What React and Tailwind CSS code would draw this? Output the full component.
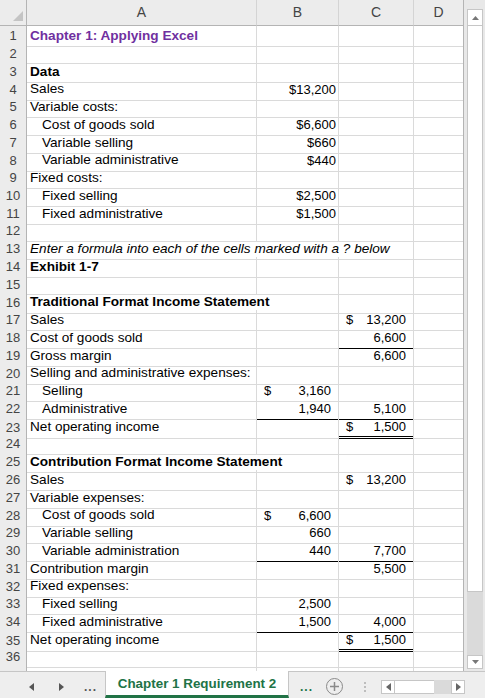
import React from 'react';

const cols = 'grid grid-cols-[27px_230px_82px_75px_49px]';

const rows = [
  { n: 1, a: 'Chapter 1: Applying Excel', k: 'title' },
  { n: 2 },
  { n: 3, a: 'Data', k: 'bold' },
  { n: 4, a: 'Sales', b: { t: '$13,200', cur: true } },
  { n: 5, a: 'Variable costs:' },
  { n: 6, a: 'Cost of goods sold', k: 'indent', b: { t: '$6,600', cur: true } },
  { n: 7, a: 'Variable selling', k: 'indent', b: { t: '$660', cur: true } },
  { n: 8, a: 'Variable administrative', k: 'indent', b: { t: '$440', cur: true } },
  { n: 9, a: 'Fixed costs:' },
  { n: 10, a: 'Fixed selling', k: 'indent', b: { t: '$2,500', cur: true } },
  { n: 11, a: 'Fixed administrative', k: 'indent', b: { t: '$1,500', cur: true } },
  { n: 12 },
  { n: 13, a: 'Enter a formula into each of the cells marked with a ? below', k: 'italic', span: 3 },
  { n: 14, a: 'Exhibit 1-7', k: 'bold' },
  { n: 15 },
  { n: 16, a: 'Traditional Format Income Statement', k: 'bold', span: 2 },
  { n: 17, a: 'Sales', c: { t: '13,200', d: true } },
  { n: 18, a: 'Cost of goods sold', c: { t: '6,600', line: 'single' } },
  { n: 19, a: 'Gross margin', c: { t: '6,600' } },
  { n: 20, a: 'Selling and administrative expenses:' },
  { n: 21, a: 'Selling', k: 'indent', b: { t: '3,160', d: true } },
  { n: 22, a: 'Administrative', k: 'indent', b: { t: '1,940', line: 'single' }, c: { t: '5,100', line: 'single' } },
  { n: 23, a: 'Net operating income', c: { t: '1,500', d: true, line: 'double' } },
  { n: 24 },
  { n: 25, a: 'Contribution Format Income Statement', k: 'bold', span: 2 },
  { n: 26, a: 'Sales', c: { t: '13,200', d: true } },
  { n: 27, a: 'Variable expenses:' },
  { n: 28, a: 'Cost of goods sold', k: 'indent', b: { t: '6,600', d: true } },
  { n: 29, a: 'Variable selling', k: 'indent', b: { t: '660' } },
  { n: 30, a: 'Variable administration', k: 'indent', b: { t: '440', line: 'single' }, c: { t: '7,700', line: 'single' } },
  { n: 31, a: 'Contribution margin', c: { t: '5,500' } },
  { n: 32, a: 'Fixed expenses:' },
  { n: 33, a: 'Fixed selling', k: 'indent', b: { t: '2,500' } },
  { n: 34, a: 'Fixed administrative', k: 'indent', b: { t: '1,500', line: 'single' }, c: { t: '4,000', line: 'single' } },
  { n: 35, a: 'Net operating income', c: { t: '1,500', d: true, line: 'double' } },
  { n: 36 },
  { n: '' },
];

const TriLeft = ({ c = '#555' }) => (
  <svg width="5" height="8" viewBox="0 0 5 8"><polygon points="5,0 5,8 0,4" fill={c} /></svg>
);
const TriRight = ({ c = '#555' }) => (
  <svg width="5" height="8" viewBox="0 0 5 8"><polygon points="0,0 0,8 5,4" fill={c} /></svg>
);

function ACell({ row }) {
  const style =
    row.k === 'title' ? 'font-bold text-[#7030a0]' :
    row.k === 'bold' ? 'font-bold' :
    row.k === 'italic' ? 'italic' : '';
  const pad = row.k === 'indent' ? 'pl-[15px]' : 'pl-[3px]';
  const span = row.span === 3 ? 'col-span-3' : row.span === 2 ? 'col-span-2' : '';
  return (
    <div className={`${span} ${pad} ${style} text-[13.6px] flex items-center whitespace-nowrap border-r border-b border-r-[#dadada] border-b-[#dadada]`}>
      {row.a}
    </div>
  );
}

function NCell({ c }) {
  if (!c) return <div className="border-r border-b border-r-[#dadada] border-b-[#dadada]" />;
  const line =
    c.line === 'double' ? 'border-b-[3px] border-double border-b-black' :
    c.line === 'single' ? 'border-b-black' : 'border-b-[#dadada]';
  if (c.cur) {
    return (
      <div className={`flex items-center justify-end pr-[2px] border-r border-b border-r-[#dadada] ${line}`}>{c.t}</div>
    );
  }
  return (
    <div className={`flex items-center justify-between pl-[7px] pr-[7px] border-r border-b border-r-[#dadada] ${line}`}>
      <span>{c.d ? '$' : ''}</span>
      <span>{c.t}</span>
    </div>
  );
}

function Row({ row }) {
  return (
    <div className={`${cols} h-[17.75px] shrink-0`}>
      <div className="flex items-center justify-center bg-[#ececec] text-[#444] border-r border-b border-r-[#b4b4b4] border-b-[#d4d4d4]">
        {row.n}
      </div>
      <ACell row={row} />
      {row.span !== 3 && row.span !== 2 && <NCell c={row.b} />}
      {row.span !== 3 && <NCell c={row.c} />}
      <div className="border-b border-b-[#dadada]" />
    </div>
  );
}

export default function App() {
  return (
    <div className="w-[485px] h-[698px] flex flex-col overflow-hidden bg-white text-[13px] text-black font-['Liberation_Sans',Arial,sans-serif]">
      <div className="h-[671px] flex overflow-hidden shrink-0">
        <div className="w-[463px] flex flex-col overflow-hidden">
          <div className={`${cols} h-[26px] shrink-0 bg-[#ececec] text-[#444] text-[14px]`}>
            <div className="flex items-end justify-end pr-[3px] pb-[4px] border-r border-b border-r-[#b4b4b4] border-b-[#b4b4b4]">
              <svg width="10" height="10" viewBox="0 0 10 10"><polygon points="10,0 10,10 0,10" fill="#c4c4c4" /></svg>
            </div>
            <div className="flex items-center justify-center border-r border-b border-r-[#d4d4d4] border-b-[#b4b4b4]">A</div>
            <div className="flex items-center justify-center border-r border-b border-r-[#d4d4d4] border-b-[#b4b4b4]">B</div>
            <div className="flex items-center justify-center border-r border-b border-r-[#d4d4d4] border-b-[#b4b4b4]">C</div>
            <div className="flex items-center justify-center border-b border-b-[#b4b4b4]">D</div>
          </div>
          {rows.map((r, i) => (
            <Row key={i} row={r} />
          ))}
        </div>

        {/* vertical scrollbar */}
        <div className="w-[22px] flex flex-col bg-[#e8e8e8] border-l border-l-[#b4b4b4] pl-[3px] pr-[2px]">
          <div className="mt-[9px] h-[17px] bg-white border border-[#c6c6c6] flex items-center justify-center">
            <svg width="7" height="4" viewBox="0 0 7 4"><polygon points="0,4 7,4 3.5,0" fill="#777" /></svg>
          </div>
          <div className="h-[566px] bg-white border border-[#c6c6c6] border-t-0" />
          <div className="flex-1 bg-[#dadada]" />
          <div className="h-[14px] mb-[2px] bg-white border border-[#c6c6c6] flex items-center justify-center">
            <svg width="7" height="4" viewBox="0 0 7 4"><polygon points="0,0 7,0 3.5,4" fill="#777" /></svg>
          </div>
        </div>
      </div>

      {/* sheet tab bar */}
      <div className="h-[27px] flex bg-[#eeeeee] border-t border-t-[#c6c6c6] shrink-0">
        <div className="w-[105px] flex items-center pt-[3px]">
          <div className="ml-[29px]"><TriLeft /></div>
          <div className="ml-[25px]"><TriRight /></div>
          <div className="ml-[20px] font-bold text-[#555] text-[12px] tracking-[1px]">...</div>
        </div>
        <div className="w-[184px] -mt-px bg-white border-l border-r border-[#c6c6c6] border-b-[3px] border-b-[#217346] flex items-center justify-center pt-[2px] font-bold text-[#217346] text-[13.4px]">
          Chapter 1 Requirement 2
        </div>
        <div className="flex items-center pt-[3px]">
          <div className="ml-[11px] font-bold text-[#217346] text-[12px] tracking-[1px]">...</div>
          <div className="ml-[13px] w-[17px] h-[17px] rounded-full border-[1.5px] border-[#8a8a8a] flex items-center justify-center">
            <svg width="9" height="9" viewBox="0 0 9 9"><path d="M4.5 0v9M0 4.5h9" stroke="#8a8a8a" strokeWidth="1.5" /></svg>
          </div>
          <div className="ml-[21px] flex flex-col gap-[2px]">
            <div className="w-[2px] h-[2px] bg-[#bdbdbd]" />
            <div className="w-[2px] h-[2px] bg-[#bdbdbd]" />
            <div className="w-[2px] h-[2px] bg-[#bdbdbd]" />
          </div>
          <div className="ml-[15px] flex h-[14px]">
            <div className="w-[14px] bg-white border border-[#c6c6c6] flex items-center justify-center">
              <TriLeft c="#666" />
            </div>
            <div className="w-[39px] bg-white border-y border-[#c6c6c6]" />
            <div className="w-[17px] bg-[#dadada]" />
            <div className="w-[14px] bg-white border border-[#c6c6c6] flex items-center justify-center">
              <TriRight c="#666" />
            </div>
          </div>
        </div>
      </div>
    </div>
  );
}
